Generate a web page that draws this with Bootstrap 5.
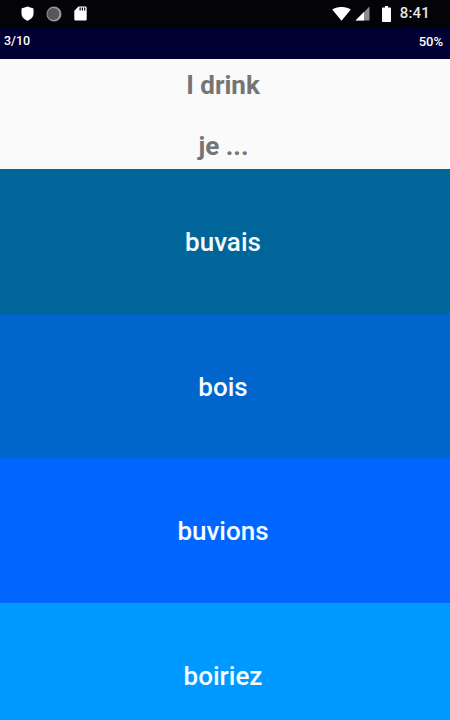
<!DOCTYPE html>
<html lang="en">
<head>
<meta charset="utf-8">
<title>Quiz</title>
<link href="https://cdn.jsdelivr.net/npm/bootstrap@5.3.0/dist/css/bootstrap.min.css" rel="stylesheet">
<style>
html, body { height: 720px; overflow: hidden; }
body { font-family: Roboto, "Liberation Sans", sans-serif; background: #fafafa; }
.status-strip { height: 27px; background: #030308; color: #fff; padding: 0 20px 0 21px; }
.status-strip .clock { font-size: 15px; font-weight: 500; letter-spacing: .2px; opacity: .9; margin-left: 9px; }
.icon-gap { margin-right: 12px; }
.progress-strip { height: 32px; background: #000033; color: #fff; font-size: 12.5px; font-weight: 500; padding: 0 7px 3px 4px; }
.progress-pct { font-size: 13px; }
.prompt-area { height: 110px; padding-top: 11px; background: #fafafa; color: #757575; font-size: 26px; font-weight: 700; line-height: 30px; text-align: center; }
.prompt-line { height: 30px; }
.prompt-first { margin-left: -4px; }
.prompt-second { margin-top: 31px; margin-left: -3px; }
.answer-tile { color: #f6fbff; font-size: 26px; font-weight: 500; height: 144.5px; padding-right: 4px; }
.tile-a { background: #006699; height: 145px; }
.tile-b { background: #0066cc; height: 144px; }
.tile-c { background: #0066ff; }
.tile-d { background: #0099ff; height: 118px; }
.tile-d span { margin-top: 30px; }
.tile-a span { margin-top: 1px; }
.tile-b span { margin-top: 2px; }
.tile-c span { margin-top: 2px; }
</style>
</head>
<body>
<div class="status-strip d-flex align-items-center">
  <svg width="13" height="15" viewBox="0 0 13 15" class="icon-gap"><path d="M6.5 0.5 L12.5 2.6 V7.5 C12.5 11 10 13.5 6.5 14.7 C3 13.5 0.5 11 0.5 7.5 V2.6 Z" fill="#fff"/></svg>
  <svg width="16" height="16" viewBox="0 0 16 16" class="icon-gap"><circle cx="8" cy="8" r="7.5" fill="#9a9a9a"/><circle cx="7.4" cy="8" r="6" fill="#56565c"/></svg>
  <svg width="13" height="15" viewBox="0 0 13 15"><path d="M4.5 0.5 H11.5 A1.2 1.2 0 0 1 12.7 1.7 V13.3 A1.2 1.2 0 0 1 11.5 14.5 H1.5 A1.2 1.2 0 0 1 0.3 13.3 V4.7 Z" fill="#fff"/><path d="M5.5 1.5h1.2v3H5.5zM7.8 1.5H9v3H7.8zM10.1 1.5h1.2v3h-1.2z" fill="#000"/></svg>
  <div class="ms-auto d-flex align-items-center">
    <svg width="19" height="14" viewBox="0 0 19 14" class="me-1"><path d="M0.2 2.6 C5.5 -0.9 13.5 -0.9 18.8 2.6 L9.5 13.8 Z" fill="#fff"/></svg>
    <svg width="15" height="15" viewBox="0 0 15 15" class="icon-gap"><path d="M14.5 0.5 V14.5 H0.5 Z" fill="#8c8c8c"/><path d="M9 6 V14.5 H0.5 Z" fill="#fff"/></svg>
    <svg width="9" height="16" viewBox="0 0 9 16"><path d="M3 0h3v1.5h2.2a.8.8 0 0 1 .8.8V15.2a.8.8 0 0 1-.8.8H.8a.8.8 0 0 1-.8-.8V2.3a.8.8 0 0 1 .8-.8H3z" fill="#fff"/></svg>
    <span class="clock">8:41</span>
  </div>
</div>
<div class="progress-strip d-flex justify-content-between align-items-center">
  <span>3/10</span><span class="progress-pct">50%</span>
</div>
<div class="prompt-area">
  <div class="prompt-line prompt-first">I drink</div>
  <div class="prompt-line prompt-second">je ...</div>
</div>
<div class="answer-tile tile-a d-flex align-items-center justify-content-center"><span>buvais</span></div>
<div class="answer-tile tile-b d-flex align-items-center justify-content-center"><span>bois</span></div>
<div class="answer-tile tile-c d-flex align-items-center justify-content-center"><span>buvions</span></div>
<div class="answer-tile tile-d d-flex align-items-center justify-content-center"><span>boiriez</span></div>
</body>
</html>
